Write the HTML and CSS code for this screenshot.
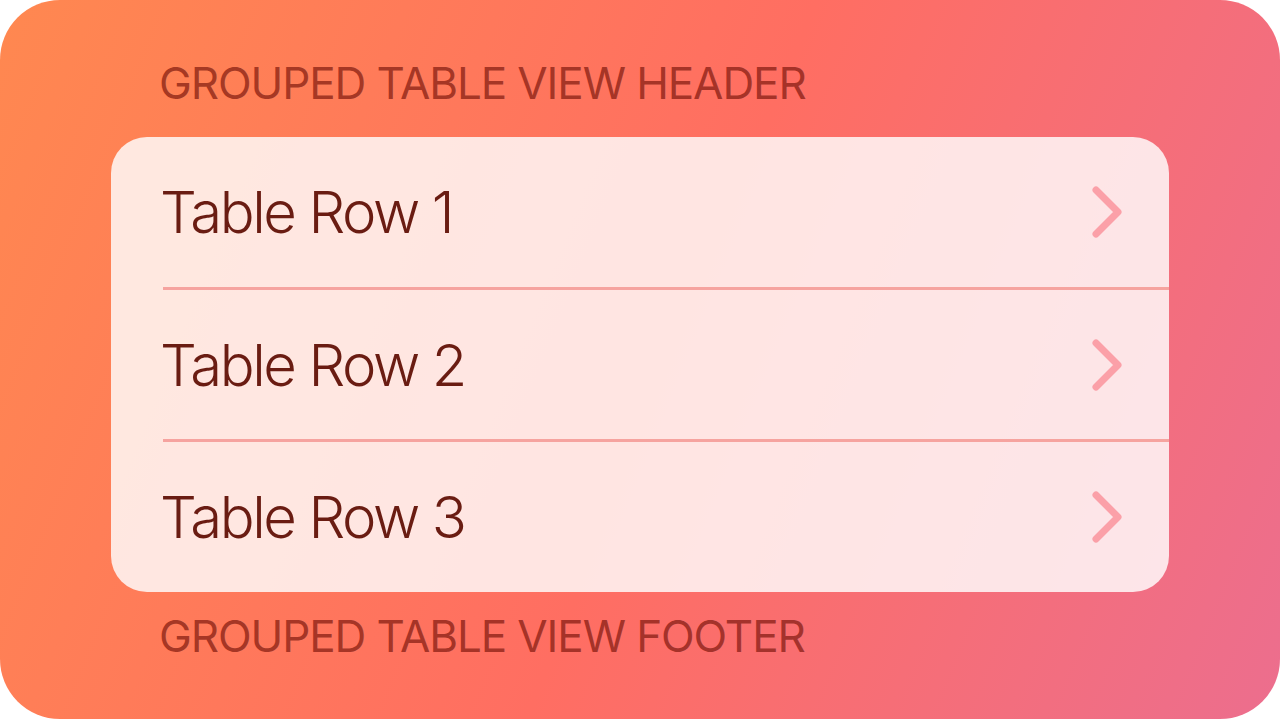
FILE: index.html
```html
<!DOCTYPE html>
<html>
<head>
<meta charset="utf-8">
<link rel="stylesheet" href="styles.css">
</head>
<body>
<div class="panel">
  <div class="section-label header">GROUPED TABLE VIEW HEADER</div>
  <div class="card">
    <div class="row sep"><span class="row-title">Table Row 1</span>
      <svg class="chev" viewBox="0 0 36 56" width="36" height="56"><path d="M7 6 L29 28 L7 50" fill="none" stroke="#FBA0A8" stroke-width="7" stroke-linecap="round" stroke-linejoin="round"/></svg>
    </div>
    <div class="row sep"><span class="row-title">Table Row 2</span>
      <svg class="chev" viewBox="0 0 36 56" width="36" height="56"><path d="M7 6 L29 28 L7 50" fill="none" stroke="#FBA0A8" stroke-width="7" stroke-linecap="round" stroke-linejoin="round"/></svg>
    </div>
    <div class="row"><span class="row-title">Table Row 3</span>
      <svg class="chev" viewBox="0 0 36 56" width="36" height="56"><path d="M7 6 L29 28 L7 50" fill="none" stroke="#FBA0A8" stroke-width="7" stroke-linecap="round" stroke-linejoin="round"/></svg>
    </div>
  </div>
  <div class="section-label footer">GROUPED TABLE VIEW FOOTER</div>
</div>
</body>
</html>
```
FILE: styles.css
```css
html, body {
  margin: 0;
  padding: 0;
  background: #ffffff;
}
.panel {
  width: 1280px;
  height: 719px;
  box-sizing: border-box;
  border-radius: 60px;
  background: linear-gradient(112deg, #FF8850 0%, #FF6E62 52%, #EC6E8E 100%);
  padding: 57px 111px 0 111px;
  display: flex;
  flex-direction: column;
  font-family: Inter, "Noto Sans", sans-serif;
}
.section-label {
  font-size: 44px;
  line-height: 52px;
  font-weight: 380;
  color: rgba(120, 20, 10, 0.68);
  padding-left: 48px;
  letter-spacing: -1.1px;
}
.header {
  margin-bottom: 28px;
}
.footer {
  margin-top: 18px;
}
.card {
  height: 455px;
  border-radius: 36px;
  background: rgba(255, 255, 255, 0.82);
  display: flex;
  flex-direction: column;
  padding-left: 52px;
  overflow: hidden;
}
.row {
  flex: 1;
  display: flex;
  align-items: center;
  justify-content: space-between;
  padding-right: 44px;
  box-sizing: border-box;
}
.sep {
  border-bottom: 3px solid #F6A39F;
}
.row-title {
  font-size: 58px;
  line-height: 60px;
  font-weight: 360;
  letter-spacing: -2.4px;
  color: #6A1C12;
  margin-left: -3px;
}
.chev {
  display: block;
}
```
